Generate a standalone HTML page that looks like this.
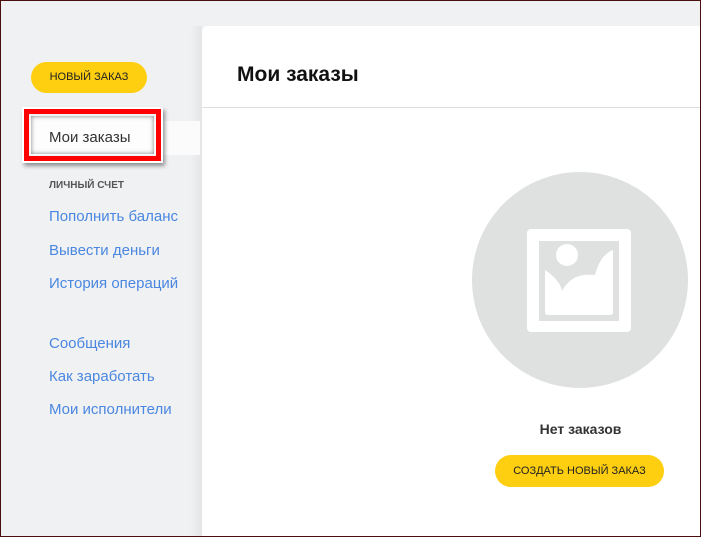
<!DOCTYPE html><html><head><meta charset="utf-8"><style>
body{margin:0;width:701px;height:537px;overflow:hidden;background:#f0f1f3;font-family:"Liberation Sans",Arial,sans-serif;position:relative}
.frame{position:absolute;left:0;top:0;width:699px;height:535px;border:1px solid #4a0f0f;border-top-color:#4a0f0f;pointer-events:none;z-index:10}
.shadow{position:absolute;left:190px;top:26px;width:12px;height:511px;background:linear-gradient(to right,#f0f1f3,#e4e5e7)}
.card{position:absolute;left:202px;top:26px;width:499px;height:511px;background:#fff;border-top-left-radius:6px}
.card .hdr{height:82px;border-bottom:1px solid #dedede;box-sizing:border-box}
.card h1{position:absolute;left:35px;top:37px;margin:0;font-size:21px;font-weight:bold;color:#111;line-height:24px}
.btn{position:absolute;background:#fecf10;border-radius:16px;font-size:11px;color:#222;text-align:center;text-transform:uppercase}
.side a{position:absolute;left:49px;color:#4a87e0;font-size:15px;text-decoration:none;line-height:18px}
</style></head><body>
<div class="shadow"></div>
<div class="btn" style="left:31px;top:62px;width:116px;height:31px;line-height:31px">Новый заказ</div>
<div style="position:absolute;left:30px;top:121px;width:170px;height:34px;background:#fbfbfc"></div>
<div style="position:absolute;left:22px;top:107px;width:141px;height:56px;box-sizing:border-box;border:2px solid #fff;box-shadow:2px 3px 4px rgba(0,0,0,.4)"><div style="position:absolute;inset:0;border:5px solid #f00;"></div><div style="position:absolute;left:7px;top:7px;right:7px;bottom:7px;box-shadow:inset 0 0 5px rgba(0,0,0,.5);background:#fdfdfd"></div></div>
<div style="position:absolute;left:49px;top:129px;font-size:15px;color:#333;line-height:18px">Мои заказы</div>
<div style="position:absolute;left:49px;top:180px;font-size:10px;font-weight:bold;color:#555">ЛИЧНЫЙ СЧЕТ</div>
<div class="side"><a style="top:208px">Пополнить баланс</a><a style="top:242px">Вывести деньги</a><a style="top:275px">История операций</a><a style="top:335px">Сообщения</a><a style="top:368px">Как заработать</a><a style="top:401px">Мои исполнители</a></div>
<div class="card"><div class="hdr"></div><h1>Мои заказы</h1></div>
<div style="position:absolute;left:472px;top:172px;width:216px;height:216px;border-radius:50%;background:#dfe0e0"></div>
<svg style="position:absolute;left:472px;top:172px" width="216" height="216" viewBox="472 172 216 216">
<rect x="527" y="229" width="104" height="103" rx="4" fill="#fff"/>
<rect x="539" y="241" width="80" height="80" fill="#dfe0e0"/>
<circle cx="567" cy="255" r="11" fill="#fff"/>
<path d="M545 270 Q560 280 562 291 Q572 272 595 275 Q600 255 613 250 L613 312 Q613 315 610 315 L548 315 Q545 315 545 312 Z" fill="#fff"/>
</svg>
<div style="position:absolute;left:460px;top:421px;width:241px;text-align:center;font-size:14px;font-weight:bold;color:#333">Нет заказов</div>
<div class="btn" style="left:495px;top:455px;width:169px;height:32px;line-height:32px">Создать новый заказ</div>
<div class="frame"></div>
</body></html>
